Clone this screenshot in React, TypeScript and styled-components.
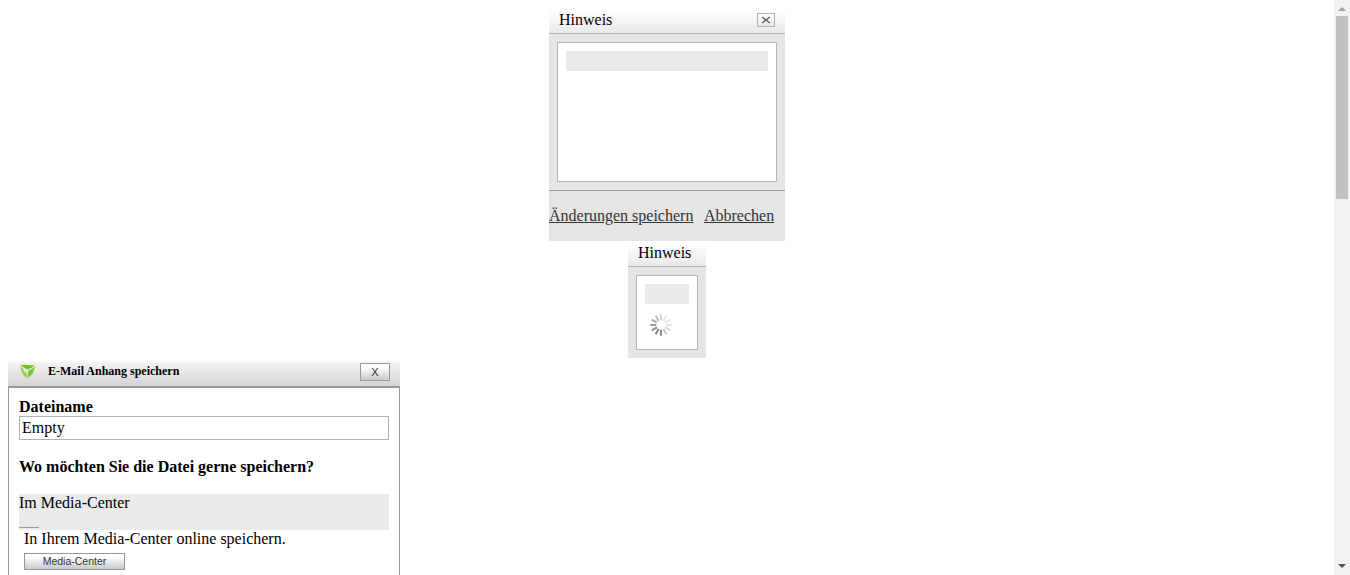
import React from "react";
import styled, { createGlobalStyle } from "styled-components";

const GlobalStyle = createGlobalStyle`
  * { box-sizing: border-box; }
  html, body { margin: 0; background: #fff; overflow: hidden; }
  body { font: 16px/18px "Liberation Serif", "Times New Roman", serif; color: #000; }
`;

const Screen = styled.div`
  display: flex;
  width: 100%;
  height: 575px;
  overflow: hidden;
`;

const Page = styled.main`
  flex: 1;
  height: 575px;
  padding: 8px 0 0 8px;
  overflow: hidden;
`;

const Centered = styled.div`
  display: flex;
  flex-direction: column;
  align-items: center;
  margin-left: -8px;
`;

const Notice = styled.section<{ $width: number; $height: number }>`
  display: flex;
  flex-direction: column;
  width: ${(p) => p.$width}px;
  height: ${(p) => p.$height}px;
  background: #e5e5e5;
`;

const NoticeHeader = styled.header`
  display: flex;
  justify-content: space-between;
  height: 26px;
  padding: 3px 10px 0;
  border-bottom: 1px solid #b2b2b2;
  background: linear-gradient(#fff, #fff 8%, #e9e9e9);
`;

const CloseButton = styled.button`
  display: flex;
  align-items: center;
  justify-content: center;
  width: 18px;
  height: 14px;
  margin-top: 2px;
  padding: 0;
  border: 1px solid #b2b2b2;
  background: linear-gradient(#fff, #e5e5e5);
`;

const NoticeBody = styled.div<{ $height: number }>`
  height: ${(p) => p.$height}px;
  margin: 8px;
  padding: 8px;
  border: 1px solid #b2b2b2;
  background: #fff;
`;

const Band = styled.div`
  height: 20px;
  background: #eaeaea;
`;

const SpinnerIcon = styled.svg`
  display: block;
  margin: 10px 0 0 5px;
`;

const NoticeFooter = styled.footer`
  display: flex;
  gap: 10.6px;
  flex: 1;
  padding-top: 16px;
  border-top: 1px solid #999;
  white-space: nowrap;
`;

const Link = styled.a`
  color: #333;
  text-decoration: underline;
`;

const SaveDialog = styled.section`
  width: 392px;
`;

const SaveHeader = styled.header`
  display: flex;
  height: 30px;
  padding: 5px 10px 0 11px;
  border-bottom: 2px solid #999;
  background: linear-gradient(#fff, #fff 8%, #f1f1f1 20%, #d4d4d4);
`;

const SaveTitle = styled.h1`
  flex: 1;
  margin: 0 0 0 12px;
  font-size: 12px;
  line-height: 16px;
`;

const GradientButton = styled.button<{ $width: number; $height: number; $size: number }>`
  display: block;
  width: ${(p) => p.$width}px;
  height: ${(p) => p.$height}px;
  padding: 0;
  border: 1px solid #999;
  background: linear-gradient(#fff 20%, #c9c9c9);
  color: #333;
  font: ${(p) => p.$size}px/13px "Liberation Sans", Arial, sans-serif;
`;

const SaveBody = styled.div`
  height: 220px;
  padding: 10px 10px 0;
  border: solid #999;
  border-width: 0 1px;
`;

const Label = styled.label`
  display: block;
  height: 18px;
  font-weight: bold;
`;

const FileInput = styled.input`
  display: block;
  width: 370px;
  height: 24px;
  padding: 1px 2px;
  border: 1px solid #b2b2b2;
  background: #fff;
  color: #000;
  font: inherit;
`;

const Question = styled.h2`
  margin: 18px 0;
  font-size: 16px;
  line-height: 18px;
`;

const Option = styled.div`
  height: 36px;
  background: #eaeaea;
`;

const EmptyLink = styled.div`
  width: 20px;
  height: 16px;
  border-bottom: 1px solid #999;
`;

const Details = styled.div`
  padding-left: 5px;
`;

const Hint = styled.p`
  margin: 0 0 5px;
`;

const Scrollbar = styled.aside`
  display: flex;
  flex-direction: column;
  align-items: center;
  justify-content: space-between;
  width: 16px;
  height: 575px;
  background: #f1f1f1;
`;

const Thumb = styled.div`
  width: 12px;
  height: 183px;
  margin-bottom: auto;
  background: #c1c1c1;
`;

const ArrowIcon = styled.svg`
  display: block;
`;

const spokeColors = ["#d0d0d0", "#e6e6e6", "#e8e8e8", "#e3e3e3", "#dadada", "#c4c4c4", "#8a8a8a", "#858585", "#8c8c8c", "#999", "#adadad", "#bdbdbd"];

function Spinner() {
  return (
    <SpinnerIcon width="22" height="22" viewBox="0 0 22 22">
      {spokeColors.map((color, i) => (
        <path key={i} d="M11 .3v6" stroke={color} strokeWidth="2" transform={`rotate(${i * 30} 11 11)`} />
      ))}
    </SpinnerIcon>
  );
}

function Logo() {
  return (
    <svg width="17" height="17" viewBox="0 0 17 17">
      <path fill="#72c022" d="M1 2.6L5 1.8L15.8 2.4L12 5L8 6.6L4.8 4.6Z" />
      <path fill="#8bd336" d="M.9 3.4L3.8 5.4L5.2 8.6L8 10.4L7.8 15.6L4.2 11.6Z" />
      <path fill="#79c624" d="M16.3 3L13.6 10.4L8.4 15.4L9.2 11.4L9.2 7.8L13 6Z" />
    </svg>
  );
}

export default function App() {
  return (
    <>
      <GlobalStyle />
      <Screen>
        <Page>
          <Centered>
            <Notice $width={236} $height={233}>
              <NoticeHeader>
                <span>Hinweis</span>
                <CloseButton aria-label="Schließen">
                  <svg width="10" height="8" viewBox="0 0 10 8">
                    <path d="M1.2 1L8.8 7M8.8 1L1.2 7" stroke="#666" strokeWidth="1.5" />
                  </svg>
                </CloseButton>
              </NoticeHeader>
              <NoticeBody $height={140}><Band /></NoticeBody>
              <NoticeFooter>
                <Link>Änderungen speichern</Link>
                <Link>Abbrechen</Link>
              </NoticeFooter>
            </Notice>
            <Notice $width={78} $height={117}>
              <NoticeHeader><span>Hinweis</span></NoticeHeader>
              <NoticeBody $height={75}>
                <Band />
                <Spinner />
              </NoticeBody>
            </Notice>
          </Centered>
          <SaveDialog>
            <SaveHeader>
              <Logo />
              <SaveTitle>E-Mail Anhang speichern</SaveTitle>
              <GradientButton $width={30} $height={18} $size={11}>X</GradientButton>
            </SaveHeader>
            <SaveBody>
              <Label htmlFor="filename">Dateiname</Label>
              <FileInput id="filename" defaultValue="Empty" />
              <Question>Wo möchten Sie die Datei gerne speichern?</Question>
              <Option>
                Im Media-Center
                <EmptyLink />
              </Option>
              <Details>
                <Hint>In Ihrem Media-Center online speichern.</Hint>
                <GradientButton $width={101} $height={17} $size={10.5}>Media-Center</GradientButton>
              </Details>
            </SaveBody>
          </SaveDialog>
        </Page>
        <Scrollbar>
          <ArrowIcon width="16" height="16" viewBox="0 0 16 16"><path d="M4 11L8 7L12 11Z" fill="#a3a3a3" /></ArrowIcon>
          <Thumb />
          <ArrowIcon width="16" height="16" viewBox="0 0 16 16"><path d="M4 5L8 9L12 5Z" fill="#505050" /></ArrowIcon>
        </Scrollbar>
      </Screen>
    </>
  );
}
